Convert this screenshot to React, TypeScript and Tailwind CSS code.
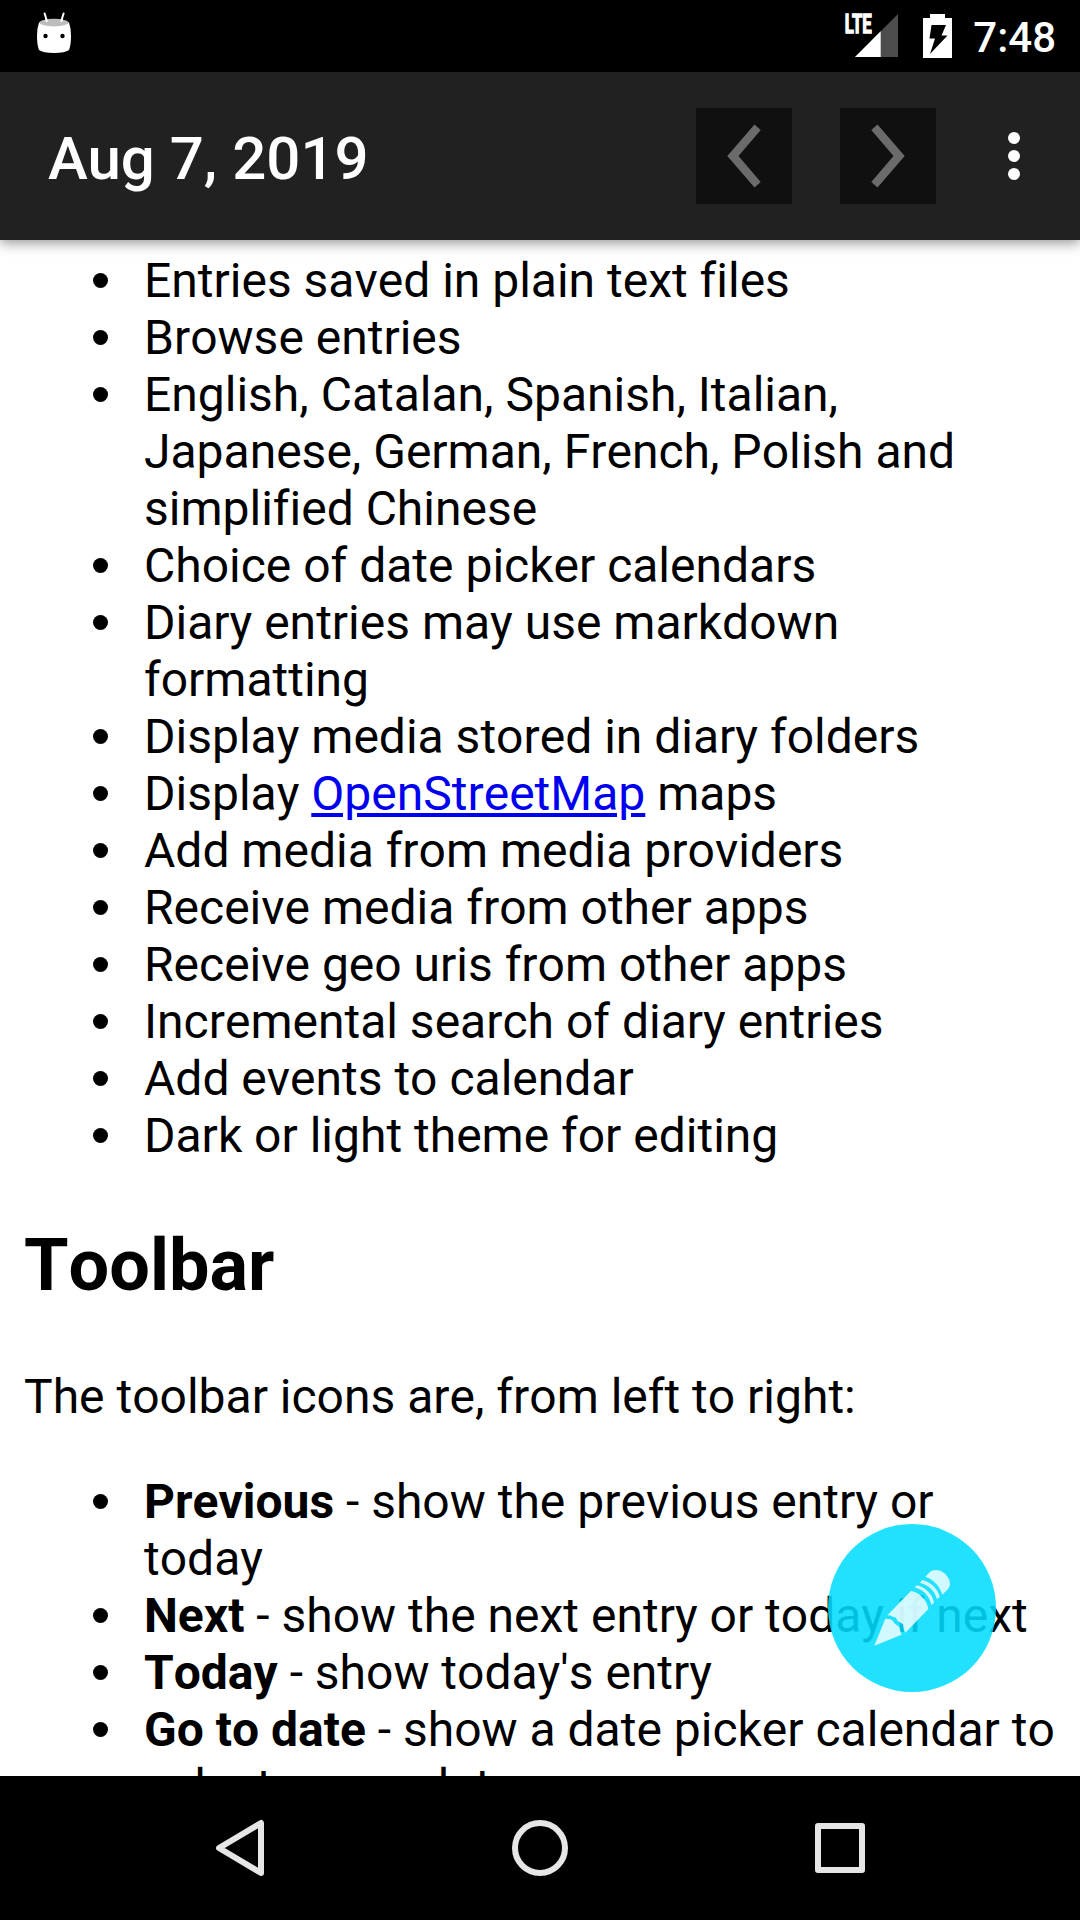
import React from "react";

const features: React.ReactNode[] = [
  "Entries saved in plain text files",
  "Browse entries",
  "English, Catalan, Spanish, Italian, Japanese, German, French, Polish and simplified Chinese",
  "Choice of date picker calendars",
  "Diary entries may use markdown formatting",
  "Display media stored in diary folders",
  <>Display <a className="text-[#0000ee] underline">OpenStreetMap</a> maps</>,
  "Add media from media providers",
  "Receive media from other apps",
  "Receive geo uris from other apps",
  "Incremental search of diary entries",
  "Add events to calendar",
  "Dark or light theme for editing",
];

const tools = [
  ["Previous", "show the previous entry or today"],
  ["Next", "show the next entry or today if next"],
  ["Today", "show today's entry"],
  ["Go to date", "show a date picker calendar to select a new date"],
];

function Item({ children }: { children: React.ReactNode }) {
  return (
    <li className="flex">
      <span className="mt-[21px] mr-[36px] h-[15px] w-[15px] shrink-0 rounded-full bg-black" />
      <span>{children}</span>
    </li>
  );
}

function Chevron({ flip = false }: { flip?: boolean }) {
  return (
    <button className="h-24 w-24 bg-[#101010]">
      <svg width="96" height="96" viewBox="0 0 96 96" className={flip ? "-scale-x-100" : ""}>
        <path d="M58.5 16.5L64.7 22L42.5 48L64.7 74L58.5 79.5L31.3 48Z" fill="#6b6b6b" />
      </svg>
    </button>
  );
}

export default function App() {
  return (
    <div className="relative flex h-[1920px] w-[1080px] flex-col overflow-hidden bg-white font-['Roboto',sans-serif]">
      <header className="flex h-[72px] shrink-0 items-center justify-between bg-black pr-[24px] pl-[30px] text-white">
        <svg width="48" height="72" viewBox="30 0 48 72">
          <path d="M44.6 13.5l2.2 7M63.6 13.5l-2.2 7" stroke="#fff" strokeWidth="2" strokeLinecap="round" />
          <path d="M39 22.5Q54 17 69 22.5Q71 28 71 36Q71 45 69 50Q65 53 54 53Q43 53 39 50Q37 45 37 36Q37 28 39 22.5Z" fill="#fff" />
          <ellipse cx="54" cy="22.6" rx="14.6" ry="3.8" fill="#bdbdbd" />
          <path d="M46 18.5l.8 2.6M62.2 18.5l-.8 2.6" stroke="#fff" strokeWidth="2" strokeLinecap="round" />
          <circle cx="45.5" cy="36" r="2.2" />
          <circle cx="62.5" cy="36" r="2.2" />
        </svg>
        <div className="flex items-center">
          <svg width="120" height="72" viewBox="840 0 120 72" className="mr-[13px]">
            <text x="844.8" y="33" fontSize="25" fontWeight="700" fill="#fff" stroke="#fff" strokeWidth="1.3" textLength="27" lengthAdjust="spacingAndGlyphs">LTE</text>
            <path d="M898 14V57H855Z" fill="#4d4d4d" />
            <path d="M880.7 31.3V57H855Z" fill="#fff" />
            <path d="M930 14h15v4h7v40h-29V18h7z" fill="#fff" />
            <path d="M931.5 25H946L941.5 35.5H947.5L930 54L935 38.5H929.5Z" />
          </svg>
          <span className="pt-[3px] text-[42px] leading-[48px] font-medium">7:48</span>
        </div>
      </header>
      <div className="z-10 flex h-[168px] shrink-0 items-center bg-[#212121] pr-[60px] pl-12 text-white shadow-[0_3px_12px_rgba(0,0,0,0.42)]">
        <h1 className="grow pt-[5px] text-[60px] font-medium">Aug 7, 2019</h1>
        <div className="flex items-center gap-12">
          <Chevron />
          <Chevron flip />
        </div>
        <div className="ml-[72px] flex w-[12px] flex-col gap-[6px]">
          <i className="h-3 w-3 rounded-full bg-white" />
          <i className="h-3 w-3 rounded-full bg-white" />
          <i className="h-3 w-3 rounded-full bg-white" />
        </div>
      </div>
      <main className="h-[1536px] overflow-hidden pt-[12px] text-[48px] leading-[57px] text-black [font-kerning:none] [font-variant-ligatures:none]">
        <ul className="pr-[24px] pl-[93px]">
          {features.map((f, i) => <Item key={i}>{f}</Item>)}
        </ul>
        <h2 className="mt-[60px] ml-6 text-[72px] leading-[84px] font-bold">Toolbar</h2>
        <p className="mt-[60px] ml-6">The toolbar icons are, from left to right:</p>
        <ul className="mt-[48px] pr-[24px] pl-[93px]">
          {tools.map(([n, t]) => <Item key={n}><b>{n}</b> - {t}</Item>)}
        </ul>
      </main>
      <nav className="h-[144px] shrink-0 bg-black">
        <svg width="1080" height="144" viewBox="0 1776 1080 144" fill="none" stroke="#e6e6e6" strokeWidth="6" strokeLinejoin="round">
          <path d="M261 1823V1873L219 1848Z" />
          <circle cx="540" cy="1848" r="25" />
          <rect x="818" y="1826" width="44" height="44" />
        </svg>
      </nav>
      <button className="absolute top-[1524px] left-[828px] z-20 h-[168px] w-[168px] rounded-full bg-[#00ddff]/87">
        <svg width="168" height="168" viewBox="828 1524 168 168">
          <g fill="#fff" fillOpacity="0.8" transform="translate(865 1560) scale(0.33333)">
            <path d="M28 257L61 176L76 178Q84 180 88 190L103 201Q105 214 110 224Z" />
            <path d="M67 166L138 93C162 96 187 121 190 147L121 218Q115 209 114 193L98 183Q94 170 83 170Q74 165 67 166Z" />
            <path d="M149 82L156 76C180 81 203 103 207 128L199 135C193 107 176 90 149 82Z" />
            <path d="M164 68L172 60C196 65 219 87 224 110L216 118C210 93 191 75 164 68Z" />
            <path d="M181 50L194 37C203 29 219 27 234 37C249 47 258 65 254 78C252 86 240 96 232 104C225 79 206 58 181 50Z" />
          </g>
        </svg>
      </button>
    </div>
  );
}
